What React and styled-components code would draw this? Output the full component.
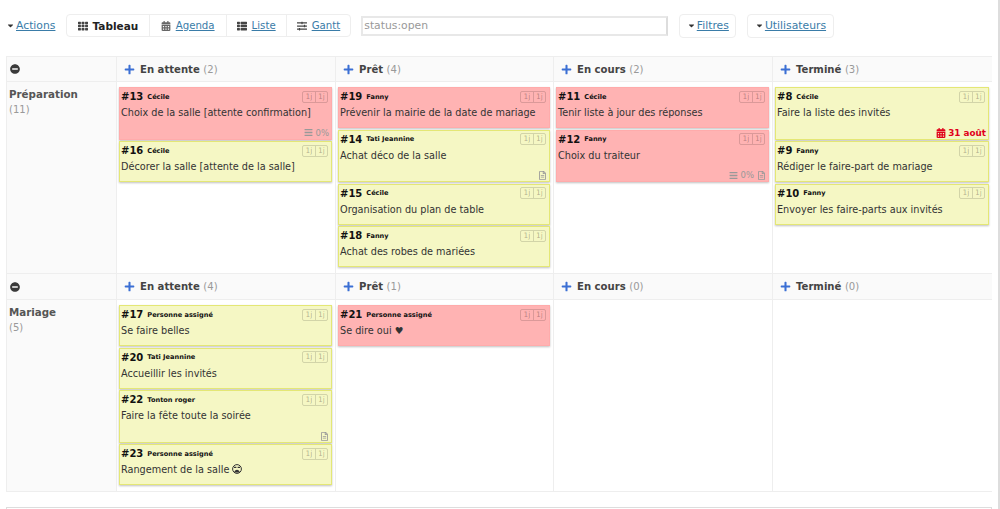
import React from 'react'
import styled, { createGlobalStyle } from 'styled-components'
import {
  FaCaretDown,
  FaTh,
  FaCalendarAlt,
  FaThList,
  FaSlidersH,
  FaPlus,
  FaMinusCircle,
  FaBars,
  FaRegFileAlt,
} from 'react-icons/fa'

const GlobalStyle = createGlobalStyle`
  html, body {
    margin: 0;
    height: 509px;
    overflow: hidden;
    background: #fff;
    color: #333;
    font-family: "DejaVu Sans", Verdana, sans-serif;
    font-size: 10px;
  }
  * { box-sizing: border-box; }
`

const Page = styled.div`
  width: 1000px;
  height: 509px;
  padding: 14px 6px 0 6px;
  border-right: 2px solid #ddd;
  overflow: hidden;
`

const Toolbar = styled.div`
  display: flex;
  align-items: center;
  height: 23px;
  margin-bottom: 19px;
`

const Link = styled.a`
  color: #3a7ca8;
  text-decoration: underline;
  font-size: ${({ $size }) => $size || 10.8}px;
`

const ActionMenu = styled.div`
  display: flex;
  align-items: center;
  gap: 1px;
  width: 60px;
  svg { font-size: 9px; color: #333; }
`

const ViewTabs = styled.div`
  display: flex;
  height: 23px;
  border: 1px solid #eee;
  border-radius: 4px;
  margin-right: 10px;
`

const ViewTab = styled.div`
  display: flex;
  align-items: center;
  gap: 5px;
  padding: 0 ${({ $pad }) => $pad || 10}px;
  border-left: ${({ $first }) => ($first ? '0' : '1px solid #eee')};
  font-size: 10.5px;
  font-weight: ${({ $active }) => ($active ? 700 : 400)};
  color: ${({ $active }) => ($active ? '#222' : '#3a7ca8')};
  svg { font-size: 10px; color: ${({ $iconColor }) => $iconColor || '#444'}; }
`

const SearchInput = styled.div`
  width: 307px;
  height: 20px;
  border: 2px solid #e8e8e8;
  border-right-color: #ddd;
  color: #999;
  font-size: 10.8px;
  line-height: 16px;
  padding-left: 1px;
  margin-right: 11px;
`

const DropButton = styled.div`
  display: flex;
  align-items: center;
  gap: 1px;
  height: 24px;
  padding: 0 6.5px;
  margin-right: 11px;
  border: 1px solid #eee;
  border-radius: 4px;
  svg { font-size: 9px; color: #333; }
`

const Board = styled.div`
  display: grid;
  grid-template-columns: 110px 219px 218px 219px 220px;
  width: 986px;
  border-bottom: 1px solid #eee;
`

const HeaderCorner = styled.div`
  height: ${({ $height }) => $height}px;
  display: flex;
  align-items: center;
  padding-left: 3px;
  background: #fafafa;
  border: 1px solid #eee;
  border-width: 1px 0 1px 1px;
  svg { font-size: 10px; color: #3a3a3a; }
`

const ColumnHeader = styled.div`
  height: ${({ $height }) => $height}px;
  display: flex;
  align-items: center;
  gap: 5px;
  padding-left: 7px;
  background: #fafafa;
  border: 1px solid #eee;
  border-width: 1px 0 1px 1px;
  font-size: 10.1px;
  font-weight: 700;
  color: #444;
  svg { font-size: 11px; color: #3b6fd4; }
  span { font-weight: 400; color: #999; }
`

const SwimlaneTitle = styled.div`
  background: #fafafa;
  border-left: 1px solid #eee;
  padding: 5px 2px;
  font-size: 10.3px;
  line-height: 15px;
  font-weight: 700;
  color: #555;
  span { display: block; font-weight: 400; color: #999; font-size: 10px; }
`

const Column = styled.div`
  min-height: 191px;
  display: flex;
  flex-direction: column;
  gap: 1.5px;
  padding: 5px 3px 5px 2px;
  border-left: 1px solid #eee;
`

const Card = styled.div`
  position: relative;
  min-height: ${({ $tall }) => ($tall ? 52.5 : 41)}px;
  padding: 2px 2px 0 1px;
  background: ${({ $red }) => ($red ? '#ffb3b3' : '#f5f7c4')};
  border: 1px solid ${({ $red }) => ($red ? '#ffabab' : '#e4e775')};
  box-shadow: 0 1px 2px rgba(0, 0, 0, 0.25);
  color: #333;
`

const CardHead = styled.div`
  display: flex;
  align-items: center;
  height: 13px;
`

const CardId = styled.span`
  font-size: 10px;
  font-weight: 700;
  color: #111;
  margin-right: 4px;
`

const Assignee = styled.span`
  font-size: 6.6px;
  font-weight: 700;
  color: #111;
`

const Ages = styled.div`
  display: flex;
  margin-left: auto;
  margin-right: 1px;
  height: 12px;
  border: 1px solid rgba(0, 0, 0, 0.14);
  border-radius: 2px;
  font-size: 7.5px;
  line-height: 10px;
  color: rgba(0, 0, 0, 0.3);
  span { width: 12px; text-align: center; }
  span + span { border-left: 1px solid rgba(0, 0, 0, 0.14); }
`

const CardTitle = styled.div`
  margin-top: 3px;
  font-size: 9.7px;
  line-height: 14px;
  white-space: nowrap;
`

const CardFooter = styled.div`
  position: absolute;
  right: 2px;
  bottom: 1px;
  display: flex;
  align-items: center;
  gap: 3px;
  font-size: 8.5px;
  color: #999;
  svg { font-size: 9px; color: #999; }
`

const DueDate = styled.div`
  display: flex;
  align-items: center;
  gap: 2px;
  font-size: 8.8px;
  font-weight: 700;
  color: #e0001a;
  svg { font-size: 10px; color: #e0001a; }
`

const BottomBar = styled.div`
  width: 986px;
  height: 10px;
  margin-top: 15px;
  border: 1px solid #ddd;
`

const Sad = () => (
  <svg width="10" height="10" viewBox="0 0 10 10" style={{ verticalAlign: '-1px' }}>
    <circle cx="5" cy="5" r="4.4" fill="none" stroke="#333" strokeWidth="1" />
    <path d="M2 3.3h2.4M5.6 3.3H8" stroke="#333" strokeWidth="1.3" />
    <path d="M2.2 8.4c.5-3.6 5.1-3.6 5.6 0z" fill="#333" />
  </svg>
)

const columnsOf = (names, counts) => names.map((name, i) => ({ name, count: counts[i] }))
const statusNames = ['En attente', 'Prêt', 'En cours', 'Terminé']

const lanes = [
  {
    title: 'Préparation',
    count: 11,
    headerHeight: 26,
    columns: columnsOf(statusNames, [2, 4, 2, 3]),
    cards: [
      [
        { id: 13, who: 'Cécile', title: 'Choix de la salle [attente confirmation]', red: true, tasks: true },
        { id: 16, who: 'Cécile', title: 'Décorer la salle [attente de la salle]' },
      ],
      [
        { id: 19, who: 'Fanny', title: 'Prévenir la mairie de la date de mariage', red: true },
        { id: 14, who: 'Tati Jeannine', title: 'Achat déco de la salle', note: true },
        { id: 15, who: 'Cécile', title: 'Organisation du plan de table' },
        { id: 18, who: 'Fanny', title: 'Achat des robes de mariées' },
      ],
      [
        { id: 11, who: 'Cécile', title: 'Tenir liste à jour des réponses', red: true },
        { id: 12, who: 'Fanny', title: 'Choix du traiteur', red: true, tasks: true, note: true },
      ],
      [
        { id: 8, who: 'Cécile', title: 'Faire la liste des invités', due: '31 août' },
        { id: 9, who: 'Fanny', title: 'Rédiger le faire-part de mariage' },
        { id: 10, who: 'Fanny', title: 'Envoyer les faire-parts aux invités' },
      ],
    ],
  },
  {
    title: 'Mariage',
    count: 5,
    headerHeight: 27,
    columns: columnsOf(statusNames, [4, 1, 0, 0]),
    cards: [
      [
        { id: 17, who: 'Personne assigné', title: 'Se faire belles' },
        { id: 20, who: 'Tati Jeannine', title: 'Accueillir les invités' },
        { id: 22, who: 'Tonton roger', title: 'Faire la fête toute la soirée', note: true },
        { id: 23, who: 'Personne assigné', title: <>Rangement de la salle <Sad /></> },
      ],
      [{ id: 21, who: 'Personne assigné', title: 'Se dire oui ♥', red: true }],
      [],
      [],
    ],
  },
]

const KanbanCard = ({ card }) => {
  const tall = card.tasks || card.note || card.due
  return (
    <Card $red={card.red} $tall={tall}>
      <CardHead>
        <CardId>#{card.id}</CardId>
        <Assignee>{card.who}</Assignee>
        <Ages>
          <span>1j</span>
          <span>1j</span>
        </Ages>
      </CardHead>
      <CardTitle>{card.title}</CardTitle>
      {tall && (
        <CardFooter>
          {card.tasks && (
            <>
              <FaBars />
              0%
            </>
          )}
          {card.note && <FaRegFileAlt />}
          {card.due && (
            <DueDate>
              <FaCalendarAlt />
              {card.due}
            </DueDate>
          )}
        </CardFooter>
      )}
    </Card>
  )
}

export default function App() {
  return (
    <Page>
      <GlobalStyle />
      <Toolbar>
        <ActionMenu>
          <FaCaretDown />
          <Link>Actions</Link>
        </ActionMenu>
        <ViewTabs>
          <ViewTab $first $active $pad={10.5}>
            <FaTh />
            Tableau
          </ViewTab>
          <ViewTab $iconColor="#666" $pad={11}>
            <FaCalendarAlt />
            <Link $size={10.2}>Agenda</Link>
          </ViewTab>
          <ViewTab>
            <FaThList />
            <Link $size={10.2}>Liste</Link>
          </ViewTab>
          <ViewTab>
            <FaSlidersH />
            <Link $size={10.2}>Gantt</Link>
          </ViewTab>
        </ViewTabs>
        <SearchInput>status:open</SearchInput>
        <DropButton>
          <FaCaretDown />
          <Link>Filtres</Link>
        </DropButton>
        <DropButton>
          <FaCaretDown />
          <Link>Utilisateurs</Link>
        </DropButton>
      </Toolbar>
      <Board>
        {lanes.map((lane) => (
          <React.Fragment key={lane.title}>
            <HeaderCorner $height={lane.headerHeight}>
              <FaMinusCircle />
            </HeaderCorner>
            {lane.columns.map((col) => (
              <ColumnHeader key={col.name} $height={lane.headerHeight}>
                <FaPlus />
                <div>
                  {col.name} <span>({col.count})</span>
                </div>
              </ColumnHeader>
            ))}
            <SwimlaneTitle>
              {lane.title}
              <span>({lane.count})</span>
            </SwimlaneTitle>
            {lane.cards.map((cards, i) => (
              <Column key={i}>
                {cards.map((card) => (
                  <KanbanCard key={card.id} card={card} />
                ))}
              </Column>
            ))}
          </React.Fragment>
        ))}
      </Board>
      <BottomBar />
    </Page>
  )
}
